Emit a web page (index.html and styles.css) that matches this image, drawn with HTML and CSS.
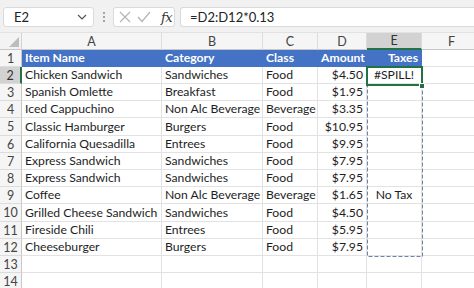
FILE: index.html
```html
<!DOCTYPE html>
<html>
<head>
<meta charset="utf-8">
<link rel="stylesheet" href="styles.css">
</head>
<body>
<div class="app">
  <div class="toolbar">
    <div class="namebox">
      <span class="nb-text">E2</span>
      <svg class="chev" width="10" height="6" viewBox="0 0 10 6"><path d="M1 1 L5 5 L9 1" fill="none" stroke="#555" stroke-width="1.2"/></svg>
    </div>
    <div class="dots"><i></i><i></i><i></i></div>
    <div class="fxbox">
      <svg class="ico" width="12" height="12" viewBox="0 0 12 12"><path d="M1 1 L11 11 M11 1 L1 11" stroke="#b4b4b4" stroke-width="1.2" fill="none"/></svg>
      <svg class="ico" width="14" height="12" viewBox="0 0 14 12"><path d="M1 6 L5 10.5 L13 1" stroke="#b4b4b4" stroke-width="1.2" fill="none"/></svg>
      <span class="fx">fx</span>
    </div>
    <div class="formula">=D2:D12*0.13</div>
  </div>
  <div class="sheet">
    <div class="grid">
      <div class="corner"><svg width="10" height="10" viewBox="0 0 10 10"><path d="M10 0 L10 10 L0 10 Z" fill="#bdbdbd"/></svg></div>
      <div class="ch">A</div><div class="ch">B</div><div class="ch">C</div><div class="ch">D</div><div class="ch ch-sel">E</div><div class="ch">F</div>

      <div class="rh">1</div>
      <div class="c hd">Item Name</div><div class="c hd">Category</div><div class="c hd">Class</div><div class="c hd">Amount</div><div class="c hd r">Taxes</div><div class="c"></div>

      <div class="rh rh-sel">2</div>
      <div class="c">Chicken Sandwich</div><div class="c">Sandwiches</div><div class="c">Food</div><div class="c r">$4.50</div><div class="c ctr">#SPILL!</div><div class="c"></div>

      <div class="rh">3</div>
      <div class="c">Spanish Omlette</div><div class="c">Breakfast</div><div class="c">Food</div><div class="c r">$1.95</div><div class="c"></div><div class="c"></div>

      <div class="rh">4</div>
      <div class="c">Iced Cappuchino</div><div class="c">Non Alc Beverage</div><div class="c">Beverage</div><div class="c r">$3.35</div><div class="c"></div><div class="c"></div>

      <div class="rh">5</div>
      <div class="c">Classic Hamburger</div><div class="c">Burgers</div><div class="c">Food</div><div class="c r">$10.95</div><div class="c"></div><div class="c"></div>

      <div class="rh">6</div>
      <div class="c">California Quesadilla</div><div class="c">Entrees</div><div class="c">Food</div><div class="c r">$9.95</div><div class="c"></div><div class="c"></div>

      <div class="rh">7</div>
      <div class="c">Express Sandwich</div><div class="c">Sandwiches</div><div class="c">Food</div><div class="c r">$7.95</div><div class="c"></div><div class="c"></div>

      <div class="rh">8</div>
      <div class="c">Express Sandwich</div><div class="c">Sandwiches</div><div class="c">Food</div><div class="c r">$7.95</div><div class="c"></div><div class="c"></div>

      <div class="rh">9</div>
      <div class="c">Coffee</div><div class="c">Non Alc Beverage</div><div class="c">Beverage</div><div class="c r">$1.65</div><div class="c ctr">No Tax</div><div class="c"></div>

      <div class="rh">10</div>
      <div class="c">Grilled Cheese Sandwich</div><div class="c">Sandwiches</div><div class="c">Food</div><div class="c r">$4.50</div><div class="c"></div><div class="c"></div>

      <div class="rh">11</div>
      <div class="c">Fireside Chili</div><div class="c">Entrees</div><div class="c">Food</div><div class="c r">$5.95</div><div class="c"></div><div class="c"></div>

      <div class="rh">12</div>
      <div class="c">Cheeseburger</div><div class="c">Burgers</div><div class="c">Food</div><div class="c r">$7.95</div><div class="c"></div><div class="c"></div>

      <div class="rh">13</div>
      <div class="c"></div><div class="c"></div><div class="c"></div><div class="c"></div><div class="c"></div><div class="c"></div>

      <div class="rh">14</div>
      <div class="c"></div><div class="c"></div><div class="c"></div><div class="c"></div><div class="c"></div><div class="c"></div>
    </div>
    <svg class="spill" width="60" height="192" viewBox="0 0 60 192"><rect x="1.5" y="0.5" width="55" height="189" fill="none" stroke="#7082aa" stroke-width="1" stroke-dasharray="4 2"/></svg>
    <div class="sel"></div>
    <div class="handle"></div>
  </div>
</div>
</body>
</html>
```

FILE: styles.css
```css
* { box-sizing: border-box; }
html, body { margin: 0; padding: 0; }
body {
  width: 474px;
  height: 288px;
  overflow: hidden;
  background: #ffffff;
  font-family: Lato, "Liberation Sans", sans-serif;
  color: #222;
}
.app { width: 474px; height: 288px; overflow: hidden; }

.toolbar {
  height: 33px;
  background: #f1f1f1;
  display: flex;
  align-items: flex-start;
  padding: 7px 0 0 3px;
  border-bottom: 1px solid #e2e2e2;
}
.namebox {
  width: 91px;
  height: 20px;
  background: #fff;
  border: 1px solid #dadada;
  border-radius: 3px;
  display: flex;
  align-items: center;
  justify-content: space-between;
  padding: 0 6px 0 10px;
  font-size: 13px;
  color: #222;
}
.dots {
  width: 19px;
  height: 20px;
  display: flex;
  flex-direction: column;
  align-items: center;
  justify-content: center;
  gap: 2px;
}
.dots i { display: block; width: 2px; height: 2px; background: #8a8a8a; border-radius: 1px; }
.fxbox {
  width: 62px;
  height: 20px;
  background: #fff;
  border: 1px solid #dadada;
  border-radius: 3px;
  display: flex;
  align-items: center;
  padding: 0 0 0 5px;
  gap: 6px;
}
.fx {
  font-family: "DejaVu Serif", "Liberation Serif", serif;
  font-style: italic;
  font-size: 13px;
  color: #333;
  margin-left: 4px;
  letter-spacing: -0.5px;
}
.formula {
  flex: 1;
  margin-left: 5px;
  height: 20px;
  background: #fff;
  border: 1px solid #dadada;
  border-right: none;
  border-radius: 3px 0 0 3px;
  font-size: 13px;
  padding-left: 9px;
  line-height: 18px;
  color: #222;
}

.sheet { position: relative; }
.grid {
  display: grid;
  grid-template-columns: 22px 140px 101px 55px 49px 55px 60px;
  grid-template-rows: 17px 17px 17px 17px 17px 18px 17px 17px 17px 17px 18px 17px 17px 17px 17px;
  font-size: 12.2px;
}
.corner {
  background: #f3f3f3;
  border-right: 1px solid #d4d4d4;
  border-bottom: 1px solid #c8c8c8;
  display: flex;
  align-items: flex-end;
  justify-content: flex-end;
  padding: 0 2px 2px 0;
}
.ch {
  background: #f5f5f5;
  border-right: 1px solid #dcdcdc;
  border-bottom: 1px solid #c8c8c8;
  display: flex;
  align-items: center;
  justify-content: center;
  color: #444;
  font-size: 12.5px;
}
.ch-sel {
  background: #d2d2d2;
  border-bottom: 2px solid #217346;
  color: #333;
}
.rh {
  background: #f5f5f5;
  border-right: 1px solid #c8c8c8;
  border-bottom: 1px solid #dcdcdc;
  display: flex;
  align-items: center;
  justify-content: center;
  color: #444;
  font-size: 12.5px;
}
.rh-sel {
  background: #d2d2d2;
  border-right: 2px solid #217346;
  color: #333;
}
.c {
  border-right: 1px solid #e2e2e2;
  border-bottom: 1px solid #e2e2e2;
  padding: 0 3px;
  white-space: nowrap;
  overflow: visible;
  display: flex;
  align-items: center;
  line-height: 16px;
  color: #1e1e1e;
}
.c.r { justify-content: flex-end; }
.c.ctr { justify-content: center; }
.c.hd {
  background: #4472c4;
  border-right-color: #4472c4;
  border-bottom-color: #4472c4;
  color: #fff;
  font-weight: bold;
}

.spill {
  position: absolute;
  left: 366px;
  top: 34px;
}
.sel {
  position: absolute;
  left: 366px;
  top: 33px;
  width: 57px;
  height: 20px;
  border: 2px solid #217346;
}
.handle {
  position: absolute;
  left: 419px;
  top: 50px;
  width: 6px;
  height: 6px;
  background: #217346;
  border: 1px solid #fff;
}
```
